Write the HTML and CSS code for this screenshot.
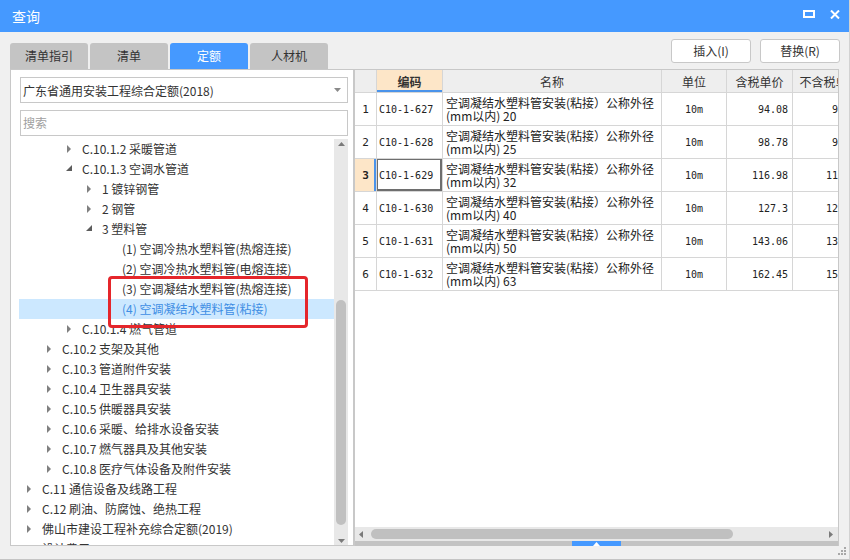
FILE: index.html
```html
<!DOCTYPE html>
<html lang="zh-CN">
<head>
<meta charset="utf-8">
<title>查询</title>
<link rel="stylesheet" href="styles.css">
</head>
<body>
<div class="window">
  <div class="titlebar">
    <span class="title">查询</span>
    <div class="win-ctrls">
      <svg class="ic-max" width="12" height="8" viewBox="0 0 12 8"><rect x="1" y="1" width="10" height="6" fill="none" stroke="#fff" stroke-width="2"/></svg>
      <svg class="ic-close" width="10" height="9" viewBox="0 0 10 9"><path d="M1 0.5 L9 8.5 M9 0.5 L1 8.5" stroke="#fff" stroke-width="2"/></svg>
    </div>
  </div>

  <div class="topbar">
    <div class="tabs">
      <div class="tab">清单指引</div>
      <div class="tab">清单</div>
      <div class="tab active">定额</div>
      <div class="tab">人材机</div>
    </div>
    <div class="actions">
      <div class="btn">插入(I)</div>
      <div class="btn">替换(R)</div>
    </div>
  </div>

  <div class="main">
    <div class="leftpanel">
      <div class="combo">
        <span>广东省通用安装工程综合定额(2018)</span>
        <svg width="7" height="4" viewBox="0 0 7 4"><path d="M0 0H7L3.5 4Z" fill="#8a8a8a"/></svg>
      </div>
      <div class="search">搜索</div>
      <div class="treearea">
        <div class="tree">
          <div class="row l2"><span class="arr"><svg width="5" height="8" viewBox="0 0 5 8"><path d="M0 0L4 4L0 8Z" fill="#808080"/></svg></span>C.10.1.2 采暖管道</div>
          <div class="row l2"><span class="arr"><svg class="exp" width="7" height="7" viewBox="0 0 7 7"><path d="M6 0V6H0Z" fill="#5c5c5c"/></svg></span>C.10.1.3 空调水管道</div>
          <div class="row l3"><span class="arr"><svg width="5" height="8" viewBox="0 0 5 8"><path d="M0 0L4 4L0 8Z" fill="#808080"/></svg></span>1 镀锌钢管</div>
          <div class="row l3"><span class="arr"><svg width="5" height="8" viewBox="0 0 5 8"><path d="M0 0L4 4L0 8Z" fill="#808080"/></svg></span>2 钢管</div>
          <div class="row l3"><span class="arr"><svg class="exp" width="7" height="7" viewBox="0 0 7 7"><path d="M6 0V6H0Z" fill="#5c5c5c"/></svg></span>3 塑料管</div>
          <div class="row l4"><span class="arr"></span>(1) 空调冷热水塑料管(热熔连接)</div>
          <div class="row l4"><span class="arr"></span>(2) 空调冷热水塑料管(电熔连接)</div>
          <div class="row l4"><span class="arr"></span>(3) 空调凝结水塑料管(热熔连接)</div>
          <div class="row l4 selected"><span class="arr"></span>(4) 空调凝结水塑料管(粘接)</div>
          <div class="row l2"><span class="arr"><svg width="5" height="8" viewBox="0 0 5 8"><path d="M0 0L4 4L0 8Z" fill="#808080"/></svg></span>C.10.1.4 燃气管道</div>
          <div class="row l1"><span class="arr"><svg width="5" height="8" viewBox="0 0 5 8"><path d="M0 0L4 4L0 8Z" fill="#808080"/></svg></span>C.10.2 支架及其他</div>
          <div class="row l1"><span class="arr"><svg width="5" height="8" viewBox="0 0 5 8"><path d="M0 0L4 4L0 8Z" fill="#808080"/></svg></span>C.10.3 管道附件安装</div>
          <div class="row l1"><span class="arr"><svg width="5" height="8" viewBox="0 0 5 8"><path d="M0 0L4 4L0 8Z" fill="#808080"/></svg></span>C.10.4 卫生器具安装</div>
          <div class="row l1"><span class="arr"><svg width="5" height="8" viewBox="0 0 5 8"><path d="M0 0L4 4L0 8Z" fill="#808080"/></svg></span>C.10.5 供暖器具安装</div>
          <div class="row l1"><span class="arr"><svg width="5" height="8" viewBox="0 0 5 8"><path d="M0 0L4 4L0 8Z" fill="#808080"/></svg></span>C.10.6 采暖、给排水设备安装</div>
          <div class="row l1"><span class="arr"><svg width="5" height="8" viewBox="0 0 5 8"><path d="M0 0L4 4L0 8Z" fill="#808080"/></svg></span>C.10.7 燃气器具及其他安装</div>
          <div class="row l1"><span class="arr"><svg width="5" height="8" viewBox="0 0 5 8"><path d="M0 0L4 4L0 8Z" fill="#808080"/></svg></span>C.10.8 医疗气体设备及附件安装</div>
          <div class="row l0"><span class="arr"><svg width="5" height="8" viewBox="0 0 5 8"><path d="M0 0L4 4L0 8Z" fill="#808080"/></svg></span>C.11 通信设备及线路工程</div>
          <div class="row l0"><span class="arr"><svg width="5" height="8" viewBox="0 0 5 8"><path d="M0 0L4 4L0 8Z" fill="#808080"/></svg></span>C.12 刷油、防腐蚀、绝热工程</div>
          <div class="row l0"><span class="arr"><svg width="5" height="8" viewBox="0 0 5 8"><path d="M0 0L4 4L0 8Z" fill="#808080"/></svg></span>佛山市建设工程补充综合定额(2019)</div>
          <div class="row l0"><span class="arr"><svg width="5" height="8" viewBox="0 0 5 8"><path d="M0 0L4 4L0 8Z" fill="#808080"/></svg></span>设计费用</div>
        </div>
        <div class="vscroll">
          <svg class="sa-up" width="7" height="4" viewBox="0 0 7 4"><path d="M3.5 0L7 4H0Z" fill="#7a7a7a"/></svg>
          <div class="vtrack"><div class="vthumb"></div></div>
          <svg class="sa-down" width="7" height="4" viewBox="0 0 7 4"><path d="M0 0H7L3.5 4Z" fill="#7a7a7a"/></svg>
        </div>
      </div>
    </div>

    <div class="rightpanel">
      <div class="grid">
        <div class="grow head">
          <div class="c cn"></div>
          <div class="c cc sel-col">编码</div>
          <div class="c cm">名称</div>
          <div class="c cu">单位</div>
          <div class="c cp">含税单价</div>
          <div class="c cq">不含税单价</div>
        </div>
        <div class="grow">
          <div class="c cn">1</div>
          <div class="c cc">C10-1-627</div>
          <div class="c cm"><span class="ln">空调凝结水塑料管安装(粘接）公称外径</span><span class="ln">(mm以内) 20</span></div>
          <div class="c cu">10m</div>
          <div class="c cp">94.08</div>
          <div class="c cq">91.63</div>
        </div>
        <div class="grow">
          <div class="c cn">2</div>
          <div class="c cc">C10-1-628</div>
          <div class="c cm"><span class="ln">空调凝结水塑料管安装(粘接）公称外径</span><span class="ln">(mm以内) 25</span></div>
          <div class="c cu">10m</div>
          <div class="c cp">98.78</div>
          <div class="c cq">96.11</div>
        </div>
        <div class="grow">
          <div class="c cn sel-row">3</div>
          <div class="c cc current">C10-1-629</div>
          <div class="c cm"><span class="ln">空调凝结水塑料管安装(粘接）公称外径</span><span class="ln">(mm以内) 32</span></div>
          <div class="c cu">10m</div>
          <div class="c cp">116.98</div>
          <div class="c cq">113.89</div>
        </div>
        <div class="grow">
          <div class="c cn">4</div>
          <div class="c cc">C10-1-630</div>
          <div class="c cm"><span class="ln">空调凝结水塑料管安装(粘接）公称外径</span><span class="ln">(mm以内) 40</span></div>
          <div class="c cu">10m</div>
          <div class="c cp">127.3</div>
          <div class="c cq">123.74</div>
        </div>
        <div class="grow">
          <div class="c cn">5</div>
          <div class="c cc">C10-1-631</div>
          <div class="c cm"><span class="ln">空调凝结水塑料管安装(粘接）公称外径</span><span class="ln">(mm以内) 50</span></div>
          <div class="c cu">10m</div>
          <div class="c cp">143.06</div>
          <div class="c cq">139.12</div>
        </div>
        <div class="grow">
          <div class="c cn">6</div>
          <div class="c cc">C10-1-632</div>
          <div class="c cm"><span class="ln">空调凝结水塑料管安装(粘接）公称外径</span><span class="ln">(mm以内) 63</span></div>
          <div class="c cu">10m</div>
          <div class="c cp">162.45</div>
          <div class="c cq">157.80</div>
        </div>
      </div>
      <div class="hscroll">
        <svg width="4" height="7" viewBox="0 0 4 7"><path d="M4 0V7L0 3.5Z" fill="#7a7a7a"/></svg>
        <div class="htrack"><div class="hthumb"></div></div>
        <svg width="4" height="7" viewBox="0 0 4 7"><path d="M0 0V7L4 3.5Z" fill="#7a7a7a"/></svg>
      </div>
      <div class="splitter">
        <div class="handle"><svg width="7" height="4" viewBox="0 0 7 4"><path d="M3.5 0L7 4H0Z" fill="#fff"/></svg></div>
      </div>
    </div>
  </div>

  <div class="annot"></div>
  <svg class="grip" width="10" height="10" viewBox="0 0 10 10">
    <rect x="7" y="1" width="2" height="2" fill="#a8a8a8"/>
    <rect x="4" y="4" width="2" height="2" fill="#a8a8a8"/>
    <rect x="7" y="4" width="2" height="2" fill="#a8a8a8"/>
    <rect x="1" y="7" width="2" height="2" fill="#a8a8a8"/>
    <rect x="4" y="7" width="2" height="2" fill="#a8a8a8"/>
    <rect x="7" y="7" width="2" height="2" fill="#a8a8a8"/>
  </svg>
</div>
</body>
</html>
```

FILE: styles.css
```css
* { box-sizing: border-box; }
html, body { margin: 0; padding: 0; }
body {
  width: 850px;
  height: 560px;
  overflow: hidden;
  background: #f0f0f0;
  font-family: "Noto Sans CJK SC", "Microsoft YaHei", sans-serif;
  font-size: 12px;
  color: #333;
}
.window {
  position: relative;
  width: 850px;
  height: 560px;
  display: flex;
  flex-direction: column;
  background: #f0f0f0;
  border-bottom: 1px solid #c4c4c4;
  border-right: 1px solid #d2d2d2;
}

/* title bar */
.titlebar {
  height: 32px;
  flex: none;
  background: #4599ff;
  display: flex;
  align-items: center;
  padding-left: 12px;
  color: #fff;
}
.title { font-size: 14px; line-height: 32px; flex: 1; }
.win-ctrls { display: flex; align-items: center; gap: 15px; padding-right: 9px; }
.ic-max { margin-top: -4px; }
.ic-close { margin-top: -3px; }

/* tabs and buttons */
.topbar {
  height: 37px;
  flex: none;
  display: flex;
  justify-content: space-between;
  padding: 0 9px 0 10px;
}
.tabs { display: flex; gap: 2px; align-self: flex-end; }
.tab {
  width: 78px;
  height: 26px;
  line-height: 26px;
  text-align: center;
  background: #c4c4c4;
  border-radius: 3px 3px 0 0;
  color: #333;
  font-size: 12px;
}
.tab.active { background: #4599ff; color: #fff; }
.actions { display: flex; gap: 9px; padding-top: 7px; }
.btn {
  width: 80px;
  height: 24px;
  line-height: 22px;
  text-align: center;
  background: #fff;
  border: 1px solid #c8c8c8;
  border-radius: 3px;
  color: #333;
}

/* main */
.main {
  height: 477px;
  flex: none;
  display: flex;
  padding: 0 10px;
}
.leftpanel {
  flex: none;
  width: 344px;
  height: 100%;
  background: #fff;
  border: 1px solid #c8c8c8;
  padding: 0 5px 0 8px;
  display: flex;
  flex-direction: column;
}
.combo {
  margin: 7px 0 0 1px;
  height: 26px;
  border: 1px solid #c8c8c8;
  display: flex;
  align-items: center;
  justify-content: space-between;
  padding: 0 6px 0 2px;
  color: #333;
  flex: none;
}
.search {
  margin: 7px 0 0 1px;
  height: 26px;
  line-height: 24px;
  border: 1px solid #c8c8c8;
  padding-left: 2px;
  color: #a0a0a0;
  flex: none;
}
.treearea {
  margin-top: 3px;
  flex: 1;
  min-height: 0;
  display: flex;
}
.tree { flex: 1; min-width: 0; overflow: hidden; }
.row {
  height: 20px;
  line-height: 20px;
  white-space: nowrap;
  display: flex;
  align-items: center;
  color: #333;
}
.row .arr { width: 15px; flex: none; display: flex; align-items: center; }
.row .arr svg { display: block; }
.row .arr svg.exp { margin-left: -1px; margin-top: -1px; }
.l0 { padding-left: 8px; }
.l1 { padding-left: 28px; }
.l2 { padding-left: 48px; }
.l3 { padding-left: 68px; }
.l4 { padding-left: 88px; }
.row.selected { background: #cce8ff; color: #3f8ee4; }

.vscroll {
  width: 14px;
  flex: none;
  background: #e8e8e8;
  display: flex;
  flex-direction: column;
  align-items: center;
  padding: 3px 0 2px;
}
.vscroll svg { display: block; flex: none; }
.vtrack { flex: 1; width: 100%; display: flex; flex-direction: column; padding: 154px 2px 14px; }
.vthumb { flex: 1; background: #c0c0c0; border-radius: 5px; }

.rightpanel {
  flex: 1;
  min-width: 0;
  height: 100%;
  display: flex;
  flex-direction: column;
  border-left: 1px solid #c8c8c8;
  border-right: 1px solid #c8c8c8;
  border-top: 1px solid #c8c8c8;
  background: #fff;
}
.grid { flex: 1; overflow: hidden; background: #fff; }
.grow {
  display: grid;
  grid-template-columns: 22px 66px 219px 65px 66px 74px;
  height: 33px;
  width: 512px;
}
.grow.head { height: 23px; }
.c {
  border-right: 1px solid #d6d6d6;
  border-bottom: 1px solid #d6d6d6;
  display: flex;
  align-items: center;
  white-space: nowrap;
  overflow: hidden;
  color: #222;
}
.cn { justify-content: center; font-family: "DejaVu Sans Mono", "Liberation Mono", monospace; font-size: 11px; }
.cc { padding-left: 2px; font-family: "DejaVu Sans Mono", "Liberation Mono", monospace; font-size: 10px; }
.cm { padding-left: 3px; flex-direction: column; align-items: flex-start; justify-content: center; font-size: 12px; }
.cm .ln { display: block; height: 13px; line-height: 13px; }
.cu { justify-content: center; font-family: "DejaVu Sans Mono", "Liberation Mono", monospace; font-size: 10px; }
.cp, .cq { justify-content: flex-end; padding-right: 4px; font-family: "DejaVu Sans Mono", "Liberation Mono", monospace; font-size: 10px; }
.head .c {
  background: #eeeeee;
  flex-direction: row;
  justify-content: center;
  align-items: center;
  padding: 0;
  color: #333;
  font-family: "Noto Sans CJK SC", "Microsoft YaHei", sans-serif;
  font-size: 12px;
}
.head .sel-col { background: #fde6c8; font-weight: bold; box-shadow: inset 0 -2px 0 #4a93ea; }
.sel-row { background: #fde6c8; font-weight: bold; box-shadow: inset -2px 0 0 #4a93ea; }
.current { box-shadow: inset 0 0 0 1px #6e6e6e, inset -1px -1px 0 1px #6e6e6e; }

.hscroll {
  height: 14px;
  flex: none;
  background: #e8e8e8;
  display: flex;
  align-items: center;
  padding: 0 5px 0 4px;
}
.hscroll svg { display: block; flex: none; }
.htrack { flex: 1; height: 10px; padding: 0 96px 0 8px; display: flex; }
.hthumb { flex: 1; background: #c0c0c0; border-radius: 5px; }
.splitter {
  height: 5px;
  flex: none;
  background: #c3c3c3;
  display: flex;
  justify-content: center;
}
.handle {
  width: 49px;
  height: 5px;
  background: #4599ff;
  display: flex;
  justify-content: center;
  align-items: center;
}
.handle svg { display: block; }

/* overlays */
.annot {
  position: absolute;
  left: 108px;
  top: 276px;
  width: 200px;
  height: 52px;
  border: 3px solid #e5262b;
  border-radius: 4px;
}
.grip { position: absolute; right: 2px; bottom: 3px; }
```
